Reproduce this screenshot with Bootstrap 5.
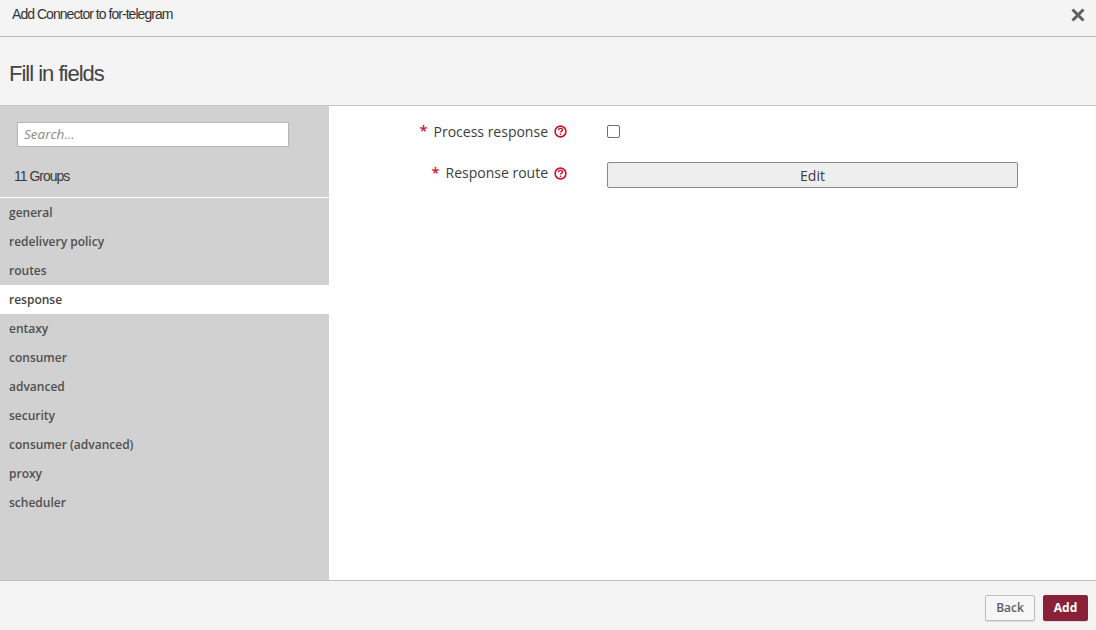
<!DOCTYPE html>
<html lang="en">
<head>
<meta charset="utf-8">
<title>Add Connector</title>
<link rel="stylesheet" href="https://cdn.jsdelivr.net/npm/bootstrap@5.3.0/dist/css/bootstrap.min.css">
<style>
html, body { height: 100%; }
body { font-family: "Open Sans", sans-serif; color: #3c3c3c; background: #fff; overflow: hidden; }
.wiz { height: 630px; width: 1096px; }
.wiz-top { height: 37px; background: #f4f4f4; border-bottom: 1px solid #b9b9b9; padding: 0 10px 0 12px; }
.wiz-title { font: 14px/1 "Liberation Sans", sans-serif; letter-spacing: -.96px; color: #333; margin: 0; padding-bottom: 9px; }
.wiz-close { width: 16px; height: 16px; padding: 0; border: 0; background: none; line-height: 0; margin-top: -6px; }
.wiz-head { height: 69px; background: #f4f4f4; border-bottom: 1px solid #c4c4c4; padding-left: 9px; }
.wiz-head h1 { font: 22px/1 "Liberation Sans", sans-serif; letter-spacing: -1px; color: #444; margin: 6px 0 0; }
.wiz-main { height: 474px; }
.wiz-side { width: 329px; background: #d1d1d1; }
.side-top { height: 92px; border-bottom: 1px solid #fff; padding: 16px 40px 0 17px; }
.side-search { width: 272px; height: 25px; border: 1px solid #b5b5b5; border-radius: 0; padding: 0 6px 2px; font-size: 13.5px; font-style: italic; color: #333; background: #fff; }
.side-search::placeholder { color: #8a8a8a; opacity: 1; }
.side-count { font: 14px/1 "Liberation Sans", sans-serif; letter-spacing: -1px; color: #3a3a3a; margin: 22px 0 0 -3px; }
.side-link { display: block; height: 29px; line-height: 29px; padding: 0 9px; font-size: 12px; font-weight: 600; color: #505050; text-decoration: none; }
.side-link.is-on { background: #fff; color: #444; }
.wiz-form { padding: 13px 0 0 0; }
.f-row { display: flex; align-items: center; }
.f-row + .f-row { margin-top: 17px; }
.f-label { width: 238px; display: flex; justify-content: flex-end; align-items: center; font-size: 14px; font-weight: 400; color: #3c3c3c; height: 26px; margin: 0; }
.f-label.up-a { padding-bottom: 2px; }
.f-label.up-b { padding-bottom: 5px; }
.f-star { color: #d0102c; margin-right: 6px; font-size: 14.5px; font-weight: 600; }
.f-help { margin-left: 6px; display: block; margin-top: 1px; }
.f-check { width: 13px; height: 13px; margin: 0 0 2px 40px; border: 1px solid #707070; border-radius: 2px; background: #fff; appearance: none; display: block; }
.f-btn { width: 411px; height: 26px; margin-left: 40px; background: #eee; border: 1px solid #8a8a8a; border-radius: 2px; font-size: 14px; color: #3c3c3c; padding: 1px 0 0; line-height: 24px; }
.wiz-foot { height: 50px; background: #f4f4f4; border-top: 1px solid #bdbdbd; padding: 4px 8px 0 0; gap: 8px; }
.foot-back, .foot-add { height: 26px; font-size: 12px; font-weight: 600; border-radius: 2px; padding: 0; line-height: 24px; }
.foot-back { width: 50px; background: #f6f6f6; color: #5a5f66; border: 1px solid #bdbdbd; box-shadow: 0 1px 1px rgba(0,0,0,.1); }
.foot-add { width: 45px; background: #8a2138; color: #fff; border: 1px solid #8a2138; font-weight: 700; box-shadow: 0 1px 1px rgba(0,0,0,.1); }
</style>
</head>
<body>
<div class="wiz d-flex flex-column">
  <div class="wiz-top d-flex justify-content-between align-items-center">
    <p class="wiz-title">Add Connector to for-telegram</p>
    <button class="wiz-close" type="button" aria-label="Close">
      <svg width="16" height="16" viewBox="0 0 16 16"><path d="M2.5 2.5l11 11M13.5 2.5l-11 11" stroke="#606060" stroke-width="3" fill="none"/></svg>
    </button>
  </div>
  <div class="wiz-head d-flex align-items-center"><h1>Fill in fields</h1></div>
  <div class="wiz-main d-flex">
    <div class="wiz-side">
      <div class="side-top">
        <input class="side-search d-block" type="text" placeholder="Search...">
        <div class="side-count">11 Groups</div>
      </div>
      <nav>
        <a class="side-link" href="#">general</a>
        <a class="side-link" href="#">redelivery policy</a>
        <a class="side-link" href="#">routes</a>
        <a class="side-link is-on" href="#">response</a>
        <a class="side-link" href="#">entaxy</a>
        <a class="side-link" href="#">consumer</a>
        <a class="side-link" href="#">advanced</a>
        <a class="side-link" href="#">security</a>
        <a class="side-link" href="#">consumer (advanced)</a>
        <a class="side-link" href="#">proxy</a>
        <a class="side-link" href="#">scheduler</a>
      </nav>
    </div>
    <div class="wiz-form flex-grow-1">
      <div class="f-row">
        <label class="f-label up-a"><span class="f-star">*</span>Process response
          <svg class="f-help" width="13" height="13" viewBox="0 0 13 13"><circle cx="6.5" cy="6.5" r="5.4" fill="none" stroke="#c8102e" stroke-width="1.6"/><path d="M4.5 5.2c0-1.1.9-1.8 2-1.8s2 .7 2 1.6c0 1.4-2 1.3-2 2.6" fill="none" stroke="#c8102e" stroke-width="1.4"/><rect x="5.8" y="8.6" width="1.4" height="1.4" fill="#c8102e"/></svg>
        </label>
        <input class="f-check" type="checkbox">
      </div>
      <div class="f-row">
        <label class="f-label up-b"><span class="f-star">*</span>Response route
          <svg class="f-help" width="13" height="13" viewBox="0 0 13 13"><circle cx="6.5" cy="6.5" r="5.4" fill="none" stroke="#c8102e" stroke-width="1.6"/><path d="M4.5 5.2c0-1.1.9-1.8 2-1.8s2 .7 2 1.6c0 1.4-2 1.3-2 2.6" fill="none" stroke="#c8102e" stroke-width="1.4"/><rect x="5.8" y="8.6" width="1.4" height="1.4" fill="#c8102e"/></svg>
        </label>
        <button class="f-btn" type="button">Edit</button>
      </div>
    </div>
  </div>
  <div class="wiz-foot d-flex justify-content-end align-items-center">
    <button class="foot-back" type="button">Back</button>
    <button class="foot-add" type="button">Add</button>
  </div>
</div>
</body>
</html>
